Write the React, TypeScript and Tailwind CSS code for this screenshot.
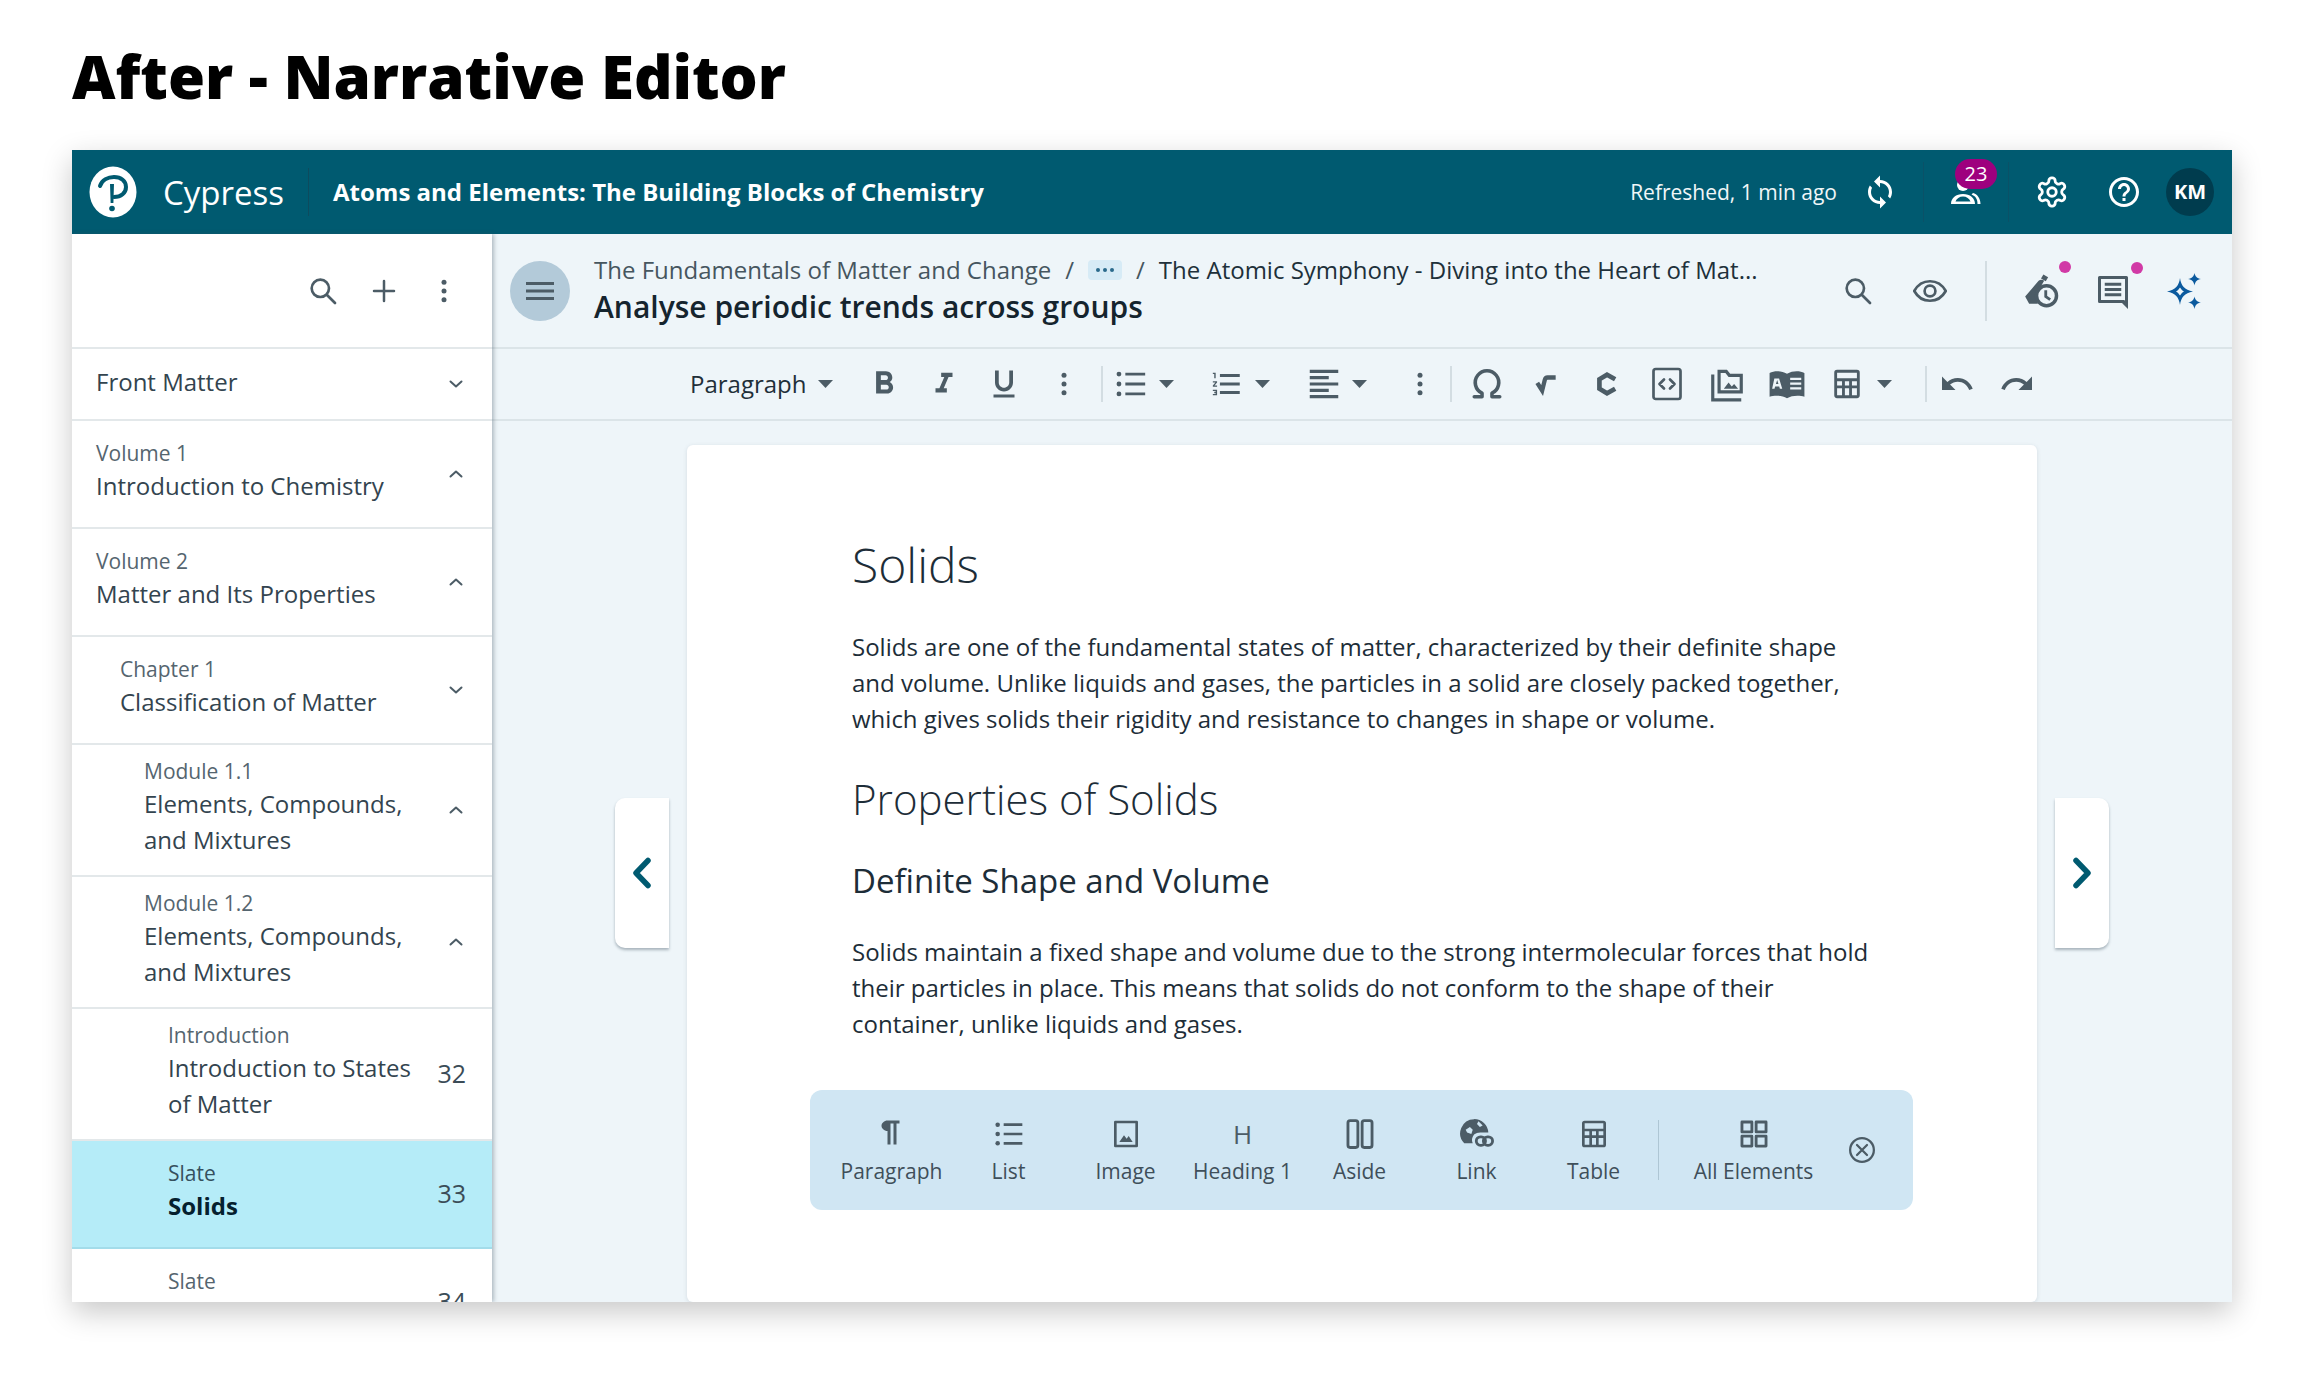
import React from "react";

type IP = { d?: string; s?: number; c?: string; children?: React.ReactNode; v?: string };
const Mi = ({ d, s = 30, c = "text-[#4c5c66]", children, v = "0 0 24 24" }: IP) => (
  <svg width={s} height={s} viewBox={v} fill="currentColor" className={`${c} shrink-0`}>
    {d ? <path d={d} /> : null}
    {children}
  </svg>
);
const St = ({ w = 2, children }: { w?: number; children: React.ReactNode }) => (
  <g fill="none" stroke="currentColor" strokeWidth={w} strokeLinecap="round" strokeLinejoin="round">{children}</g>
);

const Search = ({ s = 30 }: { s?: number }) => (
  <Mi s={s}><St w={2}><circle cx="10" cy="10" r="6.5" /><path d="M15 15l6 6" /></St></Mi>
);
const Dots = ({ s = 30 }: { s?: number }) => (
  <Mi s={s}><circle cx="12" cy="5" r="2" /><circle cx="12" cy="12" r="2" /><circle cx="12" cy="19" r="2" /></Mi>
);
const Chevron = ({ up = false }: { up?: boolean }) => (
  <svg width="18" height="18" viewBox="0 0 18 18" className="text-[#4c5c66]" fill="none" stroke="currentColor" strokeWidth="2" strokeLinecap="round" strokeLinejoin="round">
    <path d={up ? "M3.5 11.5L9 6.5l5.5 5" : "M3.5 6.5L9 11.5l5.5-5"} />
  </svg>
);
const Caret = () => (
  <svg width="16" height="10" viewBox="0 0 16 10" className="text-[#4c5c66] shrink-0" fill="currentColor"><path d="M0 1h15L7.5 9z" /></svg>
);
const Table = ({ s = 30 }: { s?: number }) => (
  <Mi s={s}>
    <path fillRule="evenodd" d="M5 2h14a2 2 0 012 2v16a2 2 0 01-2 2H5a2 2 0 01-2-2V4a2 2 0 012-2zm0 2v4h14V4H5zm0 6v3h3.5v-3H5zm5.5 0v3h3v-3h-3zm5 0v3H19v-3h-3.5zM5 15v5h3.5v-5H5zm5.5 0v5h3v-5h-3zm5 0v5H19v-5h-3.5z" />
  </Mi>
);
const ListIcon = ({ s = 34 }: { s?: number }) => (
  <Mi s={s}><circle cx="3.5" cy="5" r="1.7" /><circle cx="3.5" cy="12" r="1.7" /><circle cx="3.5" cy="19" r="1.7" /><path d="M8 4h14v2H8zM8 11h14v2H8zM8 18h14v2H8z" /></Mi>
);

const Row = ({ label, title, indent, num, up, open, selected, two }: { label?: string; title: string; indent: string; num?: string; up?: boolean; open?: boolean; selected?: boolean; two?: boolean }) => (
  <div className={`flex shrink-0 items-center border-b-2 pr-[26px] ${two ? "h-[132px]" : label ? "h-[108px]" : "h-[72px]"} ${selected ? "bg-[#b5ecf8] border-[#a3dcea]" : "border-[#e3e8ea]"} ${indent}`}>
    <div className={`min-w-0 flex-1 ${label ? "pb-[6px]" : "pb-[5px]"}`}>
      {label ? <div className={`text-[21px] leading-[30px] ${selected ? "text-[#35505e]" : "text-[#55656f]"}`}>{label}</div> : null}
      <div className={`text-[24px] leading-[36px] ${selected ? "font-bold text-[#05202e]" : "text-[#33444f]"} ${two ? "w-[262px]" : ""}`}>{title}</div>
    </div>
    {num ? <div className="ml-2 text-[25px] text-[#3b4c57]">{num}</div> : null}
    {up !== undefined || open !== undefined ? <div className="flex w-[18px] justify-center mr-[1px]"><Chevron up={up} /></div> : null}
  </div>
);

const Btn = ({ children, w = "w-[60px]" }: { children: React.ReactNode; w?: string }) => (
  <div className={`flex h-full shrink-0 items-center justify-center ${w}`}>{children}</div>
);

const Pal = ({ icon, label }: { icon: React.ReactNode; label: string }) => (
  <div className="flex w-[117px] shrink-0 flex-col items-center">
    <div className="flex h-[36px] items-center justify-center">{icon}</div>
    <div className="mt-[5px] whitespace-nowrap text-[21px] leading-[28px] text-[#3f4f5a]">{label}</div>
  </div>
);

const Pin = () => <span className="absolute right-[-12px] top-[-11px] h-[12px] w-[12px] rounded-full bg-[#d13aa6]" />;

export default function App() {
  return (
    <div className="h-[1374px] w-[2304px] overflow-hidden bg-white pl-[72px] font-['Open_Sans',sans-serif]">
      <h1 className="h-[150px] pt-[35px] text-[60px] font-extrabold leading-[82px] text-black">After - Narrative Editor</h1>
      <div className="flex h-[1152px] w-[2160px] flex-col overflow-hidden shadow-[0_10px_28px_rgba(0,0,0,0.22)]">
        {/* app bar */}
        <header className="flex h-[84px] shrink-0 items-center bg-[#005a70] text-white">
          <svg width="48" height="52" viewBox="0 0 48 52" className="ml-[17px] shrink-0">
            <ellipse cx="24" cy="26" rx="23.5" ry="25.5" fill="#fff" />
            <path d="M11 20c2-6 8-9 14-9 7 0 12 4 12 10 0 6-5 10-12 10" fill="none" stroke="#005a70" strokeWidth="4" strokeLinecap="round" />
            <path d="M21 18h4l-.6 19h-2.8z" fill="#005a70" />
            <circle cx="23" cy="42.5" r="2.8" fill="#005a70" />
          </svg>
          <span className="ml-[26px] mt-[2px] text-[33px] leading-[40px]">Cypress</span>
          <span className="ml-[24px] h-[48px] w-px bg-[#0d4b5e]" />
          <span className="ml-[24px] text-[24px] font-bold">Atoms and Elements: The Building Blocks of Chemistry</span>
          <span className="ml-auto mt-[1px] text-[21px] text-[#f0f6f8]">Refreshed, 1 min ago</span>
          <div className="ml-[25px] flex w-[36px] justify-center">
            <Mi s={36} c="text-white" d="M12 4V1L8 5l4 4V6c3.31 0 6 2.69 6 6 0 1.01-.25 1.97-.7 2.8l1.46 1.46C19.54 15.03 20 13.57 20 12c0-4.42-3.58-8-8-8zm0 14c-3.31 0-6-2.69-6-6 0-1.01.25-1.97.7-2.8L5.24 7.74C4.46 8.97 4 10.43 4 12c0 4.42 3.58 8 8 8v3l4-4-4-4v3z" />
          </div>
          <span className="ml-[25px] h-[60px] w-px bg-[#0a5167]" />
          <div className="relative flex w-[84px] justify-center">
            <svg width="32" height="32" viewBox="0 0 32 32" className="text-white" fill="currentColor">
              <circle cx="13" cy="9" r="6" />
              <path fillRule="evenodd" d="M1 28c0-6 5-10 12-10s12 4 12 10zM5.500 25.500h15c-1-3-4-5-7.500-5s-6.500 2-7.500 5z" />
              <path d="M23 17c4 1 7.500 5 7.500 11h-3c0-5-2-8-6-9.500z" />
            </svg>
            <span className="absolute left-[31px] top-[-17px] flex h-[30px] w-[42px] items-center justify-center rounded-full bg-[#9e007e] text-[20px] leading-none">23</span>
          </div>
          <span className="h-[60px] w-px bg-[#0a5167]" />
          <div className="ml-[25px] flex w-[36px] justify-center">
            <svg width="34" height="34" viewBox="0 0 24 24" fill="none" stroke="#fff" strokeWidth="2" strokeLinecap="round" strokeLinejoin="round">
              <path d="M12.22 2h-.44a2 2 0 0 0-2 2v.18a2 2 0 0 1-1 1.73l-.43.25a2 2 0 0 1-2 0l-.15-.08a2 2 0 0 0-2.73.73l-.22.38a2 2 0 0 0 .73 2.73l.15.1a2 2 0 0 1 1 1.72v.51a2 2 0 0 1-1 1.74l-.15.09a2 2 0 0 0-.73 2.73l.22.38a2 2 0 0 0 2.73.73l.15-.08a2 2 0 0 1 2 0l.43.25a2 2 0 0 1 1 1.73V20a2 2 0 0 0 2 2h.44a2 2 0 0 0 2-2v-.18a2 2 0 0 1 1-1.73l.43-.25a2 2 0 0 1 2 0l.15.08a2 2 0 0 0 2.73-.73l.22-.39a2 2 0 0 0-.73-2.73l-.15-.08a2 2 0 0 1-1-1.74v-.5a2 2 0 0 1 1-1.74l.15-.09a2 2 0 0 0 .73-2.73l-.22-.38a2 2 0 0 0-2.73-.73l-.15.08a2 2 0 0 1-2 0l-.43-.25a2 2 0 0 1-1-1.73V4a2 2 0 0 0-2-2z" />
              <circle cx="12" cy="12" r="3" />
            </svg>
          </div>
          <div className="ml-[36px] flex w-[36px] justify-center">
            <Mi s={36} c="text-white" d="M11 18h2v-2h-2v2zm1-16C6.48 2 2 6.48 2 12s4.48 10 10 10 10-4.48 10-10S17.52 2 12 2zm0 18c-4.41 0-8-3.59-8-8s3.59-8 8-8 8 3.59 8 8-3.59 8-8 8zm0-14c-2.21 0-4 1.79-4 4h2c0-1.1.9-2 2-2s2 .9 2 2c0 2-3 1.75-3 5h2c0-2.25 3-2.5 3-5 0-2.21-1.79-4-4-4z" />
          </div>
          <div className="ml-[24px] mr-[18px] flex h-[48px] w-[48px] items-center justify-center rounded-full bg-[#003c4e] text-[20px] font-bold">KM</div>
        </header>

        <div className="flex min-h-0 flex-1">
          {/* sidebar */}
          <aside className="z-10 flex w-[420px] shrink-0 flex-col overflow-hidden bg-white shadow-[2px_0_4px_rgba(60,80,95,0.35)]">
            <div className="flex h-[115px] shrink-0 items-center justify-end gap-[30px] border-b-2 border-[#e3e8ea] pr-[33px]">
              <Search s={32} />
              <Mi s={30}><St w={2}><path d="M12 4v16M4 12h16" /></St></Mi>
              <Dots />
            </div>
            <Row title="Front Matter" indent="pl-[24px]" open />
            <Row label="Volume 1" title="Introduction to Chemistry" indent="pl-[24px]" up />
            <Row label="Volume 2" title="Matter and Its Properties" indent="pl-[24px]" up />
            <Row label="Chapter 1" title="Classification of Matter" indent="pl-[48px]" open />
            <Row label="Module 1.1" title="Elements, Compounds, and Mixtures" indent="pl-[72px]" up two />
            <Row label="Module 1.2" title="Elements, Compounds, and Mixtures" indent="pl-[72px]" up two />
            <Row label="Introduction" title="Introduction to States of Matter" indent="pl-[96px]" num="32" two />
            <Row label="Slate" title="Solids" indent="pl-[96px]" num="33" selected />
            <Row label="Slate" title="Liquids" indent="pl-[96px]" num="34" />
          </aside>

          {/* main */}
          <main className="relative flex min-w-0 flex-1 flex-col bg-[#eef5f9]">
            <div className="flex h-[115px] shrink-0 items-center border-b-2 border-[#dbe4e8] pl-[18px]">
              <div className="flex h-[60px] w-[60px] shrink-0 items-center justify-center rounded-full bg-[#b3cad9]">
                <svg width="30" height="20" viewBox="0 0 30 20" fill="#4c5c66"><path d="M1 1h28v3H1zM1 8.500h28v3H1zM1 16h28v3H1z" /></svg>
              </div>
              <div className="ml-[24px] w-[1200px] shrink-0 pb-[1px]">
                <div className="flex items-center text-[24px] leading-[34px] text-[#46565f]">
                  <span>The Fundamentals of Matter and Change</span>
                  <span className="ml-[14px]">/</span>
                  <span className="ml-[14px] flex h-[20px] w-[34px] items-center justify-center gap-[3px] rounded bg-[#d7ebf6]">
                    <i className="h-[4px] w-[4px] rounded-full bg-[#2b6a8c]" /><i className="h-[4px] w-[4px] rounded-full bg-[#2b6a8c]" /><i className="h-[4px] w-[4px] rounded-full bg-[#2b6a8c]" />
                  </span>
                  <span className="ml-[14px]">/</span>
                  <span className="ml-[14px] text-[#20303a]">The Atomic Symphony - Diving into the Heart of Mat...</span>
                </div>
                <div className="text-[30px] font-semibold leading-[40px] text-[#15242e]">Analyse periodic trends across groups</div>
              </div>
              <div className="ml-[46px] flex w-[36px] justify-center"><Search s={32} /></div>
              <div className="ml-[36px] flex w-[36px] justify-center">
                <Mi s={36}><St w={1.8}><path d="M1.5 12C4 7.5 8 5.500 12 5.500s8 2 10.500 6.500C20 16.500 16 18.500 12 18.500S4 16.500 1.500 12z" /><circle cx="12" cy="12" r="3.600" /></St></Mi>
              </div>
              <span className="ml-[37px] h-[60px] w-[2px] bg-[#d3dde2]" />
              <div className="relative ml-[36px] flex w-[36px] justify-center">
                <Mi s={38}>
                  <path d="M13.500 1.500l3 1.800-1.500 2.600-3-1.800z" />
                  <path d="M10.500 5.500c1-.8 2.500-.8 3.500 0L9 14l1 6H4.500L2 15.500z" />
                  <circle cx="15.500" cy="15" r="6.300" fill="none" stroke="currentColor" strokeWidth="2.200" />
                  <path d="M15 11.500v4l2.800 2" fill="none" stroke="currentColor" strokeWidth="1.800" />
                </Mi>
                <Pin />
              </div>
              <div className="relative ml-[36px] flex w-[36px] justify-center">
                <Mi s={36}>
                  <path fillRule="evenodd" d="M3 2h18a1 1 0 011 1v21l-4-4H3a1 1 0 01-1-1V3a1 1 0 011-1zm1 2v14h15.500l.5.5V4zM6.500 6.500h11v2h-11zm0 3.500h11v2h-11zm0 3.500h11v2h-11z" />
                </Mi>
                <Pin />
              </div>
              <div className="ml-[36px] flex w-[36px] justify-center">
                <svg width="36" height="36" viewBox="0 0 36 36" fill="#0b5a9e">
                  <path fillRule="evenodd" d="M13 5c1 7.500 4.500 12 13 13.500C17.500 20 14 24.500 13 32 12 24.500 8.500 20 0 18.500 8.500 17 12 12.500 13 5zm0 9.500c-1 1.500-2.200 3-4 4 1.800 1 3 2.500 4 4 1-1.500 2.200-3 4-4-1.800-1-3-2.500-4-4z" />
                  <path d="M27.500 0c.7 3.500 2.500 5.300 6.500 6-4 .7-5.800 2.500-6.500 6.500-.7-4-2.500-5.800-6.500-6.500 4-.7 5.800-2.500 6.500-6zM27.500 23.500c.7 3.500 2.500 5.300 6.500 6-4 .7-5.800 2.500-6.500 6.500-.7-4-2.500-5.800-6.500-6.500 4-.7 5.800-2.500 6.500-6z" />
                </svg>
              </div>
            </div>

            <div className="flex h-[72px] shrink-0 items-center border-b-2 border-[#dbe4e8] pl-[198px]">
              <div className="flex h-full w-[164px] shrink-0 items-center">
                <span className="text-[24px] text-[#1f2f39]">Paragraph</span>
                <span className="ml-[11px]"><Caret /></span>
              </div>
              <Btn><Mi s={38} d="M15.6 10.79c.97-.67 1.65-1.77 1.65-2.79 0-2.26-1.75-4-4-4H7v14h7.04c2.09 0 3.71-1.7 3.71-3.79 0-1.52-.86-2.82-2.15-3.42zM10 6.500h3c.83 0 1.500.67 1.500 1.500s-.67 1.500-1.500 1.500h-3v-3zm3.500 9H10v-3h3.500c.83 0 1.500.67 1.500 1.500s-.67 1.500-1.500 1.500z" /></Btn>
              <Btn><Mi s={34} d="M10 4v3h2.210l-3.420 8H6v3h8v-3h-2.210l3.420-8H18V4z" /></Btn>
              <Btn><Mi s={36} d="M12 17c3.310 0 6-2.690 6-6V3h-2.500v8c0 1.930-1.570 3.500-3.500 3.500S8.500 12.930 8.500 11V3H6v8c0 3.310 2.690 6 6 6zm-7 2v2h14v-2H5z" /></Btn>
              <Btn><Dots /></Btn>
              <span className="ml-[7px] h-[36px] w-[2px] shrink-0 bg-[#d3dde2]" />
              <Btn w="w-[56px]"><ListIcon /></Btn>
              <div className="w-[40px] shrink-0"><Caret /></div>
              <Btn w="w-[56px]"><Mi s={34} d="M2 17h2v.5H3v1h1v.5H2v1h3v-4H2v1zm1-9h1V4H2v1h1v3zm-1 3h1.800L2 13.100v.9h3v-1H3.200L5 10.900V10H2v1zm5-6v2h14V5H7zm0 14h14v-2H7v2zm0-6h14v-2H7v2z" /></Btn>
              <div className="w-[41px] shrink-0"><Caret /></div>
              <Btn w="w-[56px]"><Mi s={38} d="M15 15H3v2h12v-2zm0-8H3v2h12V7zM3 13h18v-2H3v2zm0 8h18v-2H3v2zM3 3v2h18V3H3z" /></Btn>
              <div className="w-[38px] shrink-0"><Caret /></div>
              <Btn><Dots /></Btn>
              <span className="h-[36px] w-[2px] shrink-0 bg-[#d3dde2]" />
              <span className="w-[5px] shrink-0" />
              <Btn><Mi s={34}><St w={2.500}><path d="M3 21h5.500v-2.500a8.300 8.300 0 117 0V21H21" /></St></Mi></Btn>
              <Btn><Mi s={26}><g fill="none" stroke="currentColor" strokeWidth="4" strokeLinejoin="miter"><path d="M3 11l4.500 7L10 8c.400-1.500 1-2 2.500-2H20" /></g></Mi></Btn>
              <Btn><Mi s={28}><g fill="none" stroke="currentColor" strokeWidth="4"><path d="M19 8l-7-4-6.500 4v8l6.500 4 7-4" /></g></Mi></Btn>
              <Btn><Mi s={36}><St w={1.800}><rect x="3" y="2" width="18" height="20" rx="1.500" /></St><St w={1.800}><path d="M10 9l-3 3 3 3M14 9l3 3-3 3" /></St></Mi></Btn>
              <Btn><Mi s={38}><path fillRule="evenodd" d="M6 3h6l2 2.500h8V18H6zm2 2v11h12V7.500h-7L11 5zM10 15l3-4 2 2.500 1.500-1.500 2.500 3zM2 6h2v15h17v2H2z" /></Mi></Btn>
              <Btn><Mi s={38}><path fillRule="evenodd" d="M1 5c3-1.500 7.500-1.500 11 .5 3.500-2 8-2 11-.5v15c-3-1-8-1-11 1-3-2-8-2-11-1zm3 3.500L2.600 15h1.500l.4-1.500h2.600l.4 1.500H9l-2-6.500zm1 3.500l.8-2.500.8 2.500zM14 8v1.500h7V8zm0 3v1.500h7V11zm0 3v1.500h7V14z" /></Mi></Btn>
              <Btn><Table s={34} /></Btn>
              <div className="w-[15px] shrink-0"><Caret /></div>
              <span className="ml-[33px] h-[36px] w-[2px] shrink-0 bg-[#d3dde2]" />
              <Btn><Mi s={36} d="M12.500 8c-2.650 0-5.050.99-6.900 2.600L2 7v9h9l-3.620-3.620c1.390-1.160 3.160-1.880 5.120-1.880 3.540 0 6.550 2.310 7.600 5.500l2.370-.78C21.080 11.030 17.150 8 12.500 8z" /></Btn>
              <Btn><Mi s={36} d="M18.400 10.600C16.550 8.990 14.150 8 11.500 8c-4.650 0-8.580 3.030-9.960 7.220L3.900 16c1.050-3.190 4.050-5.500 7.600-5.500 1.950 0 3.730.72 5.120 1.880L13 16h9V7l-3.600 3.600z" /></Btn>
            </div>

            <div className="min-h-0 flex-1 px-[195px] pt-[24px]">
              <article className="h-[857px] rounded-[6px] bg-white pl-[165px] pr-[165px] pt-[90px] text-[#1d2d38] shadow-[0_1px_4px_rgba(60,80,95,0.15)]">
                <h2 className="text-[48px] font-light leading-[60px] text-[#1d2d38]">Solids</h2>
                <p className="mt-[34px] w-[1010px] text-[24px] leading-[36px]">Solids are one of the fundamental states of matter, characterized by their definite shape and volume. Unlike liquids and gases, the particles in a solid are closely packed together, which gives solids their rigidity and resistance to changes in shape or volume.</p>
                <h3 className="mt-[34px] text-[42px] font-light leading-[56px]">Properties of Solids</h3>
                <h4 className="mt-[32px] text-[33px] leading-[44px]">Definite Shape and Volume</h4>
                <p className="mt-[31px] w-[1030px] text-[24px] leading-[36px]">Solids maintain a fixed shape and volume due to the strong intermolecular forces that hold their particles in place. This means that solids do not conform to the shape of their container, unlike liquids and gases.</p>
                <div className="ml-[-42px] mt-[48px] flex h-[120px] w-[1103px] items-center rounded-[12px] bg-[#d0e6f3] pl-[23px]">
                  <Pal label="Paragraph" icon={<Mi s={36} d="M9 10v9h2V5h2v14h2V5h2V3H9C6.800 3 5 4.800 5 6.500S6.800 10 9 10z" />} />
                  <Pal label="List" icon={<ListIcon s={32} />} />
                  <Pal label="Image" icon={<Mi s={32}><path fillRule="evenodd" d="M4 2h16a1 1 0 011 1v18a1 1 0 01-1 1H4a1 1 0 01-1-1V3a1 1 0 011-1zm1 2v16h14V4zM7 18l3.500-5 2 2.500 1.500-2 3 4.500z" /></Mi>} />
                  <Pal label="Heading 1" icon={<span className="text-[26px] leading-none text-[#4c5c66]">H</span>} />
                  <Pal label="Aside" icon={<Mi s={34}><St w={2}><rect x="3.500" y="2.500" width="7" height="19" rx="1.500" /><rect x="13.500" y="2.500" width="7" height="19" rx="1.500" /></St></Mi>} />
                  <Pal label="Link" icon={<Mi s={34}>
                    <path d="M10 1.500A10 10 0 003 18.500L9 18.500c-1-2-.5-4 .5-5.500 1-1.500 4-2 5-2H20A10 10 0 0010 1.500zM7 7l2 2-1 3-3-1-1-2zM13 3l3 3-2 1-2-2z" />
                    <g fill="none" stroke="currentColor" strokeWidth="2"><rect x="11.500" y="14" width="6.500" height="6" rx="3" /><rect x="16.500" y="14" width="6.500" height="6" rx="3" /></g>
                  </Mi>} />
                  <Pal label="Table" icon={<Table s={32} />} />
                  <span className="ml-[6px] h-[60px] w-px shrink-0 bg-[#aec6d4]" />
                  <div className="ml-[36px]"><Pal label="All Elements" icon={<Mi s={34}><St w={2}><path d="M3.500 3.500h7v7h-7zM13.500 3.500h7v7h-7zM3.500 13.500h7v7h-7zM13.500 13.500h7v7h-7z" /></St></Mi>} /></div>
                  <div className="mb-[1px] ml-[25px] flex w-[50px] justify-center">
                    <Mi s={30}><St w={1.800}><circle cx="12" cy="12" r="9.500" /><path d="M8 8l8 8M16 8l-8 8" /></St></Mi>
                  </div>
                </div>
              </article>
            </div>

            {/* pagers */}
            <button className="absolute left-[123px] top-[564px] flex h-[150px] w-[54px] items-center justify-center rounded-l-[10px] bg-white shadow-[0_2px_3px_rgba(60,80,95,0.4)]">
              <svg width="22" height="32" viewBox="0 0 22 32" fill="none" stroke="#005a70" strokeWidth="5.500" strokeLinecap="round" strokeLinejoin="round"><path d="M17 3.500L5 16l12 12.500" /></svg>
            </button>
            <button className="absolute left-[1563px] top-[564px] flex h-[150px] w-[54px] items-center justify-center rounded-r-[10px] bg-white shadow-[0_2px_3px_rgba(60,80,95,0.4)]">
              <svg width="22" height="32" viewBox="0 0 22 32" fill="none" stroke="#005a70" strokeWidth="5.500" strokeLinecap="round" strokeLinejoin="round"><path d="M5 3.500L17 16 5 28.500" /></svg>
            </button>
          </main>
        </div>
      </div>
    </div>
  );
}
